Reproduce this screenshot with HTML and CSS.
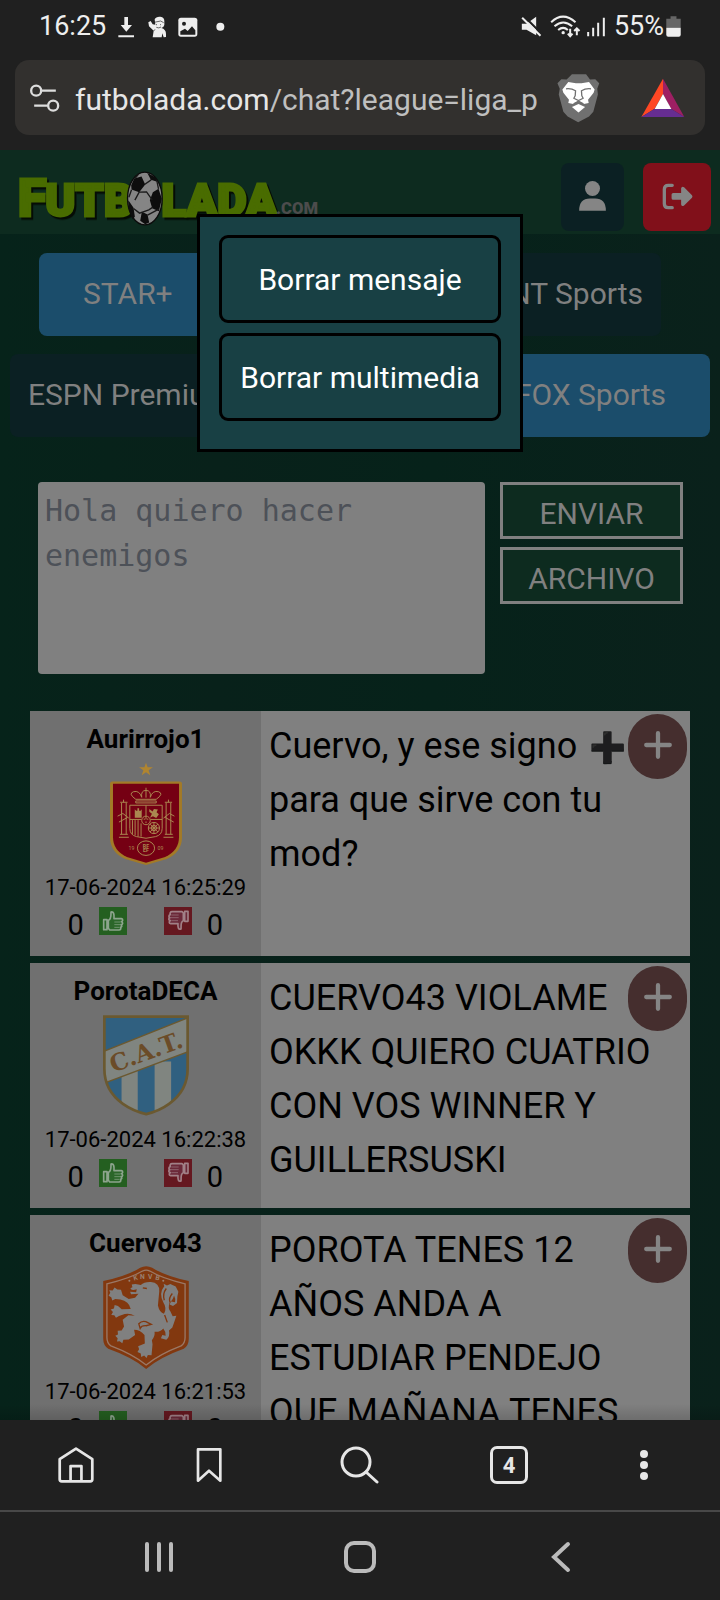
FILE: index.html
```html
<!DOCTYPE html>
<html lang="es">
<head>
<meta charset="utf-8">
<meta name="viewport" content="width=device-width, initial-scale=1">
<title>Futbolada - Chat</title>
<link rel="stylesheet" href="styles.css">
</head>
<body>
<svg class="defs" aria-hidden="true">
  <symbol id="thumb-up" viewBox="0 0 84 84">
    <path d="M14 38h10v30H14zM28 40c9-3 8-15 8-25 8-2 10 6 9 20h22c6 1 5 9 0 9 6 2 5 9-1 9 4 2 3 8-2 8 3 3 1 8-4 8H32l-4-5z" fill="#2b6629" stroke="#8da48d" stroke-width="5" stroke-linejoin="round"/>
    <path d="M46 45h18M46 53h17M46 61h14" stroke="#6f936e" stroke-width="3"/>
  </symbol>
  <symbol id="thumb-down" viewBox="0 0 84 84">
    <path d="M62 13h10v30H62zM58 41c-9 3-6 12-7 25-8 3-10-5-9-16H20c-6-1-5-8-1-9-6-1-6-8-1-9-5-2-4-8 1-9-2-4 0-9 5-9h30l4 4z" fill="#6b2939" stroke="#a18087" stroke-width="5" stroke-linejoin="round"/>
    <path d="M22 24h22M20 32h24M22 41h20" stroke="#8d616b" stroke-width="3"/>
  </symbol>
  <symbol id="plus" viewBox="0 0 28 28">
    <path d="M14 3v22M3 14h22" stroke="currentColor" stroke-width="4" stroke-linecap="round"/>
  </symbol>
</svg>

<div class="status">
  <span class="clock">16:25</span>
  <svg class="st-left" viewBox="350 40 330 75" aria-hidden="true">
    <g fill="#eee">
      <path d="M375 49h11v24h12l-17 20-17-20h11zM357 104h47v6h-47z"/>
      <path d="M466 56q4-9 17-8 13 2 12 15v10q-2 8-9 9 14 4 14 18v9l-7 1-4-12-2 12h-27l3-20-14-13-2-12 7-4 6 10 8 1z"/>
      <rect x="537" y="51" width="57" height="57" rx="8"/>
      <circle cx="663" cy="78" r="12"/>
    </g>
    <path d="M464 65l20-4 9 5M470 72h3M482 72h3M471 80q8 4 14-1M463 91l4-5" fill="none" stroke="#222" stroke-width="2"/>
    <circle cx="554" cy="69" r="6" fill="#202020"/>
    <path d="M543 92l14-8 8 7 13-14 10 12v13h-45z" fill="#202020"/>
  </svg>
  <svg class="st-right" viewBox="480 40 260 75" aria-hidden="true">
    <path d="M485 69h14l29-21v56l-29-17h-14z" fill="#eee"/>
    <path d="M488 43l60 60" stroke="#202020" stroke-width="6"/>
    <path d="M486 51l55 54" stroke="#eee" stroke-width="6"/>
    <g fill="none" stroke="#eee" stroke-width="6">
      <path d="M573 65q35-34 73 0M583 77q26-23 53 0M594 88q15-13 29 0"/>
      <path d="M630 84v22M623 99l7 8 7-8M650 104V84M642 91l8-8 8 8"/>
      <path d="M684 94v13M699 81v26M714 66v41M731 51v56"/>
    </g>
    <circle cx="609" cy="96" r="5" fill="#eee"/>
  </svg>
  <span class="percent">55%</span>
  <svg class="battery" viewBox="0 0 44 64" aria-hidden="true">
    <path d="M13 1h18v7h13v28H0V8h13z" fill="#666"/><path d="M0 36h44v21q0 6-6 6H6q-6 0-6-6z" fill="#eee"/>
  </svg>
</div>

<div class="address">
  <svg class="tune" viewBox="88 245 95 90" fill="none" stroke="#ddd" stroke-width="7" aria-hidden="true">
    <circle cx="109" cy="268" r="15"/><path d="M126 268h42M103 313h41"/><circle cx="160" cy="313" r="15"/>
  </svg>
  <div class="url">futbolada.com<span class="path">/chat?league=liga_p</span></div>
  <svg class="brave" viewBox="590 215 130 152" aria-hidden="true">
    <path d="M635 219h43l12 16 16-1 12 12-6 17 2 17-14 53-13 14-33 18-32-18-13-14-14-53 3-17-7-17 12-12 16 1z" fill="#707070"/>
    <path d="M624 242l23 4h17l23-4 17 23-3 10-17 21 2 10-15 3-16-10-16 10-15-3 2-10-17-21-3-10z" fill="#fff"/>
    <path d="M655 309l20 9-20 17-20-17z" fill="#fff"/>
    <path d="M617 263q16-2 29 6l-1 15-4 8 14 7 14-7-4-8-1-15q13-8 29-6M640 309l15-8 15 8" fill="none" stroke="#707070" stroke-width="4"/>
  </svg>
  <svg class="bat" viewBox="842 232 132 120" aria-hidden="true">
    <path d="M908 234v46l-25 44-40 25z" fill="#ff4724"/><path d="M908 234l64 115-40-25-24-44z" fill="#9e1f63"/><path d="M843 349l40-25h49l40 25z" fill="#662d91"/><path d="M908 280l25 45h-50z" fill="#fff"/>
  </svg>
</div>

<main class="page">
  <header class="top">
    <svg class="logo" viewBox="50 45 910 200" role="img" aria-label="Futbolada.com">
      <g class="logo-type">
        <text x="53" y="214" class="big">F</text><text x="135" y="214">UTB</text><text x="484" y="214">LADA</text>
      </g>
      <text x="828" y="206" class="com">.COM</text>
      <ellipse cx="434" cy="160" rx="52" ry="79" fill="#858585" stroke="#0b0b0b" stroke-width="4"/>
      <g fill="#0d0d0d">
        <path d="M402 100l22-6 11 24-18 23-23-8-1-13zM458 141l17-10 10 30-9 37-20-9-7-24zM385 166l15 22 4 27-7 7q-12-22-13-52zM425 200l17 8 5 24-12 5-15-10zM441 83l27 15 3 12-19-6z"/>
      </g>
      <path d="M417 141l-13 24M417 141l22-1 17 24M433 118l20-14M400 190l18 14 28-10 12-8M475 131l-5-24M404 100l12-14M442 210l34-18M394 134l-8 22" fill="none" stroke="#1a1a1a" stroke-width="4"/>
    </svg>
    <div class="top-actions">
      <button class="icon-btn user" aria-label="Perfil"><svg viewBox="657 107 82 92"><circle cx="698" cy="130" r="23" fill="currentColor"/><path d="M657 198q0-37 33-37h16q33 0 33 37z" fill="currentColor"/></svg></button>
      <button class="icon-btn logout" aria-label="Salir"><svg viewBox="904 112 94 82"><path d="M935 119h-12q-12 0-12 12v44q0 12 12 12h12" fill="none" stroke="currentColor" stroke-width="10" stroke-linecap="round"/><path d="M938 142h24v-14q2-8 9-3l24 24q3 4 0 8l-24 23q-7 5-9-3v-14h-24q-5 0-5-5v-11q0-5 5-5z" fill="currentColor"/></svg></button>
    </div>
  </header>

  <nav class="channels">
    <div class="row row-a"><button class="chan wide on">STAR+</button><button class="chan">TNT Sports</button></div>
    <div class="row row-b"><button class="chan">ESPN Premium</button><button class="chan wide on">FOX Sports</button></div>
  </nav>

  <form class="compose">
    <textarea class="message" aria-label="Mensaje" placeholder="Hola quiero hacer enemigos"></textarea>
    <div class="compose-actions">
      <button type="button" class="send">ENVIAR</button>
      <button type="button" class="send">ARCHIVO</button>
    </div>
  </form>

  <section class="posts">
    <article class="post">
      <div class="author">
        <div class="name">Aurirrojo1</div>
        <svg class="crest" viewBox="265 186 218 312" aria-label="España">
          <path d="M374 188l5 14h16l-13 9 5 15-13-9-13 9 5-15-13-9h16z" fill="#b08530"/>
          <path d="M272 245h204q7 0 7 7v162q0 45-46 66l-63 18-63-18q-46-21-46-66V252q0-7 7-7z" fill="#a37a27"/>
          <path d="M274 252h200v162q0 40-42 60l-58 17-58-17q-42-20-42-60z" fill="#750013"/>
          <g fill="none" stroke="#aa8850" stroke-width="3">
            <path d="M343 299q-24-17-7-23 18-5 25 17-3-21 13-21t13 21q7-22 25-17 17 6-7 23zM374 264v30M343 304h62v6h-62z"/>
            <path d="M325 317h98v70q0 20-20 25l-29 5-29-5q-20-5-20-25zM374 317v43M325 360h35M388 360h35"/>
            <path d="M333 362v42M341 362v46M350 362v50M359 372v40"/>
            <circle cx="374" cy="363" r="13"/><path d="M367 359h4M377 359h4M374 366v5"/>
            <circle cx="398" cy="386" r="17"/><circle cx="398" cy="386" r="8"/><path d="M398 369v34M381 386h34M386 374l24 24M410 374l-24 24"/>
            <path d="M300 310v95M314 310v95M435 310v95M449 310v95M296 308h22M431 308h22M292 414h30M427 414h30M295 405h24M431 405h24M288 350l16-8 18 14M292 368l26-14M427 356l18-14 15 8M432 354l26 14M306 300v8M442 300v8"/>
            <ellipse cx="374" cy="447" rx="26" ry="22"/>
          </g>
          <path d="M340 355v-26l4 5h4v-8h5v8h5l3-5v26zM384 328l10 8 4-8 12 2-4 8 7 6-8 12-10-6-9 5 6-12-8-6z" fill="#aa8850"/>
          <g fill="#aa8850" font-family="Roboto" font-size="16" font-weight="700" text-anchor="middle"><text x="374" y="445">RF</text><text x="374" y="460">EF</text><text x="330" y="453" font-weight="400">19</text><text x="418" y="453" font-weight="400">09</text></g>
        </svg>
        <time class="date">17-06-2024 16:25:29</time>
        <div class="votes"><span>0</span><button class="vote up" aria-label="Me gusta"><svg><use href="#thumb-up"/></svg></button><button class="vote down" aria-label="No me gusta"><svg><use href="#thumb-down"/></svg></button><span>0</span></div>
      </div>
      <p class="text">Cuervo, y ese signo <span class="emoji">➕</span> para que sirve con tu mod?</p>
      <button class="more" aria-label="Más opciones"><svg><use href="#plus"/></svg></button>
    </article>

    <article class="post">
      <div class="author">
        <div class="name">PorotaDECA</div>
        <svg class="crest" viewBox="249 183 255 298" aria-label="Atlético Tucumán">
          <clipPath id="cat"><path d="M253 187h247v155q0 65-55 104-30 22-68 30-38-8-69-30-55-39-55-104z"/></clipPath>
          <g clip-path="url(#cat)">
            <path d="M249 183h255v300H249z" fill="#306080"/>
            <path d="M304 340h48v140h-48zM402 320h49v160h-49z" fill="#808580"/>
            <path d="M249 291l255-102v101L249 386z" fill="#808580" stroke="#6b5930" stroke-width="4"/>
          </g>
          <path d="M253 187h247v155q0 65-55 104-30 22-68 30-38-8-69-30-55-39-55-104z" fill="none" stroke="#6b5930" stroke-width="8"/>
          <text x="378" y="316" text-anchor="middle" transform="rotate(-20 378 295)" font-family="DejaVu Serif" font-weight="700" font-size="70" fill="#6b4c28">C.A.T.</text>
        </svg>
        <time class="date">17-06-2024 16:22:38</time>
        <div class="votes"><span>0</span><button class="vote up" aria-label="Me gusta"><svg><use href="#thumb-up"/></svg></button><button class="vote down" aria-label="No me gusta"><svg><use href="#thumb-down"/></svg></button><span>0</span></div>
      </div>
      <p class="text">CUERVO43 VIOLAME OKKK QUIERO CUATRIO CON VOS WINNER Y GUILLERSUSKI</p>
      <button class="more" aria-label="Más opciones"><svg><use href="#plus"/></svg></button>
    </article>

    <article class="post">
      <div class="author">
        <div class="name">Cuervo43</div>
        <svg class="crest" viewBox="249 183 255 307" aria-label="Países Bajos">
          <path d="M249 228q74-16 110-40 18-9 36 0 36 24 109 40v172q0 20-15 30-70 25-112 60-42-35-113-60-15-10-15-30z" fill="#82380f"/>
          <path d="M260 236q70-16 106-38 11-5 22 0 36 22 105 38v160q0 17-12 25-65 25-104 57-39-32-105-57-12-8-12-25z" fill="none" stroke="#9a7866" stroke-width="4"/>
          <path d="M361 240q10-10 30-9 26 2 25 28l-4 42q5 22 18 24 10-15-2-34-14-28 3-48l-2-7 10 5 10-4 16 7 8 16-3 14-1 19-12 9-10-4 4-9 12 2q2-12-3-20-4 16-13 20-6 18 2 27l7 15 11-2-6 18-6 17-10 9q4 18-8 28l-16-5 4-9 10 2q1-13-7-22-10 12-26 10 2 13-8 25l2 12-3 33-11-1-4 9-7-7-9 4-1-10-10-5 5-8-3-9 20-8-1-25q-13-16-31-16l3 16-19 13-16 1-3 10-8-6-8 1 2-10-7-7 8-4-1-11 12-1 7-12-4-20 17-13 19 1q-14-8-30-5l-17 6-9 5-5-7-9-1 5-9-7-7 10-3 2-11 10 3 11 10 27-1q-5-23-31-28l-15-2-9 5-3-10-8-4 5-9-3-8 10 1 6-9 8 6 11 1 5 16 18 11 19-3 10-12-22 1-3-7 18 1 2-9q-17 6-19-3l6-3-2-8 11-1z" fill="#808080"/>
          <path d="M355 355q9-10 21-6l16 8-15 4q-14-1-18 8zM437 250q-12 16-6 35M455 265q-12 14-7 26M432 329l8 22M367 248l12 2" fill="none" stroke="#82380f" stroke-width="4"/>
          <g fill="#9a8070" font-family="Roboto" font-weight="700" font-size="20" text-anchor="middle"><text x="345" y="225" transform="rotate(-14 345 218)">K</text><text x="366" y="221">N</text><text x="389" y="221">V</text><text x="411" y="225" transform="rotate(14 411 218)">B</text><circle cx="327" cy="227" r="3"/><circle cx="428" cy="227" r="3"/></g>
        </svg>
        <time class="date">17-06-2024 16:21:53</time>
        <div class="votes"><span>0</span><button class="vote up" aria-label="Me gusta"><svg><use href="#thumb-up"/></svg></button><button class="vote down" aria-label="No me gusta"><svg><use href="#thumb-down"/></svg></button><span>0</span></div>
      </div>
      <p class="text">POROTA TENES 12 AÑOS ANDA A ESTUDIAR PENDEJO QUE MAÑANA TENES</p>
      <button class="more" aria-label="Más opciones"><svg><use href="#plus"/></svg></button>
    </article>
  </section>

  <div class="dialog" role="dialog" aria-label="Opciones del mensaje">
    <button class="option">Borrar mensaje</button>
    <button class="option">Borrar multimedia</button>
  </div>
</main>

<nav class="toolbar">
  <button aria-label="Inicio"><svg width="36" height="36" viewBox="174 113 106 106" fill="none" stroke="#e6e6e6" stroke-width="8" stroke-linejoin="round"><path d="M227 118l48 31v59q0 6-6 6h-84q-6 0-6-6v-59zM211 213v-44h32v44"/></svg></button>
  <button aria-label="Marcadores"><svg width="26" height="34" viewBox="590 116 76 102" fill="none" stroke="#e6e6e6" stroke-width="8" stroke-linejoin="round"><path d="M595 120h67v94l-34-30-33 30z"/></svg></button>
  <button aria-label="Buscar"><svg width="40" height="40" viewBox="0 0 40 40" fill="none" stroke="#e6e6e6" stroke-width="3" stroke-linecap="round"><circle cx="17" cy="17" r="14"/><path d="M27 27l11 10"/></svg></button>
  <button aria-label="Pestañas"><span class="tabs">4</span></button>
  <button aria-label="Menú"><svg width="8" height="32" viewBox="0 0 8 32" fill="#e6e6e6"><circle cx="4" cy="5" r="4"/><circle cx="4" cy="16" r="4"/><circle cx="4" cy="27" r="4"/></svg></button>
</nav>
<nav class="system">
  <button aria-label="Recientes"><svg width="30" height="32" viewBox="0 0 30 32" stroke="#bbb" stroke-width="4" stroke-linecap="round"><path d="M3 3v26M15 3v26M27 3v26"/></svg></button>
  <button aria-label="Inicio del sistema"><svg width="34" height="34" viewBox="0 0 34 34" fill="none" stroke="#bbb" stroke-width="4"><rect x="3" y="3" width="28" height="28" rx="8"/></svg></button>
  <button aria-label="Atrás"><svg width="20" height="32" viewBox="0 0 20 32" fill="none" stroke="#bbb" stroke-width="4" stroke-linecap="round"><path d="M17 3L3 16l14 13"/></svg></button>
</nav>
</body>
</html>
```

FILE: styles.css
```css
* { box-sizing: border-box; }
body {
  margin: 0;
  height: 100vh;
  display: flex;
  flex-direction: column;
  overflow: hidden;
  background: #202020;
  font-family: Roboto, "Liberation Sans", sans-serif;
}
button { margin: 0; padding: 0; border: 0; background: none; font: inherit; color: inherit; }
svg { display: block; flex: none; }
.defs { position: absolute; width: 0; height: 0; }

/* phone status bar */
.status { display: flex; align-items: center; flex: none; height: 52px; margin-bottom: 8px; padding: 0 39px; color: #eee; font-size: 27px; }
.clock { margin-right: 10px; }
.st-left { width: 110px; height: 25px; }
.st-right { width: 87px; height: 25px; margin: 0 7px 0 auto; }
.battery { width: 15px; height: 21px; margin-left: 2px; }

/* address bar */
.address { display: flex; align-items: center; flex: none; height: 75px; margin: 0 15px 15px; padding: 0 20px 0 14px; border-radius: 14px; background: #32302e; }
.tune { width: 32px; height: 30px; }
.url { flex: 1; min-width: 0; margin-left: 14px; padding-top: 3px; overflow: hidden; white-space: nowrap; font-size: 30px; color: #e6e6e6; }
.path { color: #bfbfbf; }
.brave { width: 43px; height: 50px; }
.bat { width: 44px; height: 40px; margin-left: 41px; }

/* web page */
.page {
  position: relative;
  flex: 1;
  min-height: 0;
  overflow: hidden;
  background: linear-gradient(90deg, #06231a, #08211a 30%, #06221a 60%, #0a211b);
}
.page::after { content: ""; position: absolute; left: 0; right: 0; bottom: 0; height: 16px; background: linear-gradient(transparent, rgba(0, 0, 0, .15)); }
.top { display: flex; justify-content: space-between; align-items: flex-start; height: 84px; padding: 10px 9px 0 17px; background: #0d2b1f; }
.logo { width: 303px; height: 67px; overflow: visible; }
.logo-type { font-weight: 900; font-size: 136px; fill: #496c00; stroke: #496c00; stroke-width: 9px; filter: drop-shadow(6px 7px 0 #050c05); }
.big { font-size: 156px; }
.com { font-size: 50px; font-weight: 900; fill: #4c4c4c; }
.top-actions { display: flex; gap: 19px; margin-top: 3px; }
.icon-btn { display: flex; justify-content: center; height: 68px; border-radius: 8px; color: #858585; }
.user { width: 63px; padding-top: 18px; background: #0b2023; }
.user svg { width: 27px; height: 30px; }
.logout { width: 68px; padding-top: 20px; background: #81101a; }
.logout svg { width: 31px; height: 27px; }

.channels { display: grid; gap: 18px; padding-top: 19px; font-size: 30px; }
.row { display: flex; justify-content: space-between; }
.row-a { padding: 0 59px 0 39px; }
.row-b { padding: 0 10px 0 10px; }
.chan { height: 83px; padding: 0 18px 2px; border-radius: 8px; background: #0b2023; color: #808080; }
.wide { padding: 0 44px 2px; }
.on { background: #1b4d6b; }

.compose { display: flex; gap: 15px; padding: 45px 37px 0 38px; }
.message { flex: 1; min-width: 0; height: 192px; padding: 6px 7px; border: 0; border-radius: 4px; resize: none; background: #808080; font: 30px/45px "DejaVu Sans Mono", monospace; }
.message::placeholder { color: #4d5158; opacity: 1; }
.compose-actions { display: grid; align-content: start; gap: 8px; width: 183px; }
.send { height: 57px; padding-top: 5px; border: 3px solid #808080; background: #0d2b1f; color: #808080; font-size: 30px; }

.posts { display: grid; gap: 7px; padding: 37px 30px 0; }
.post { position: relative; display: flex; min-height: 245px; background: #808080; color: #000; }
.author { display: flex; flex-direction: column; align-items: center; flex: none; width: 231px; padding-top: 7px; background: #707070; }
.name { height: 44px; line-height: 42px; font-size: 26px; font-weight: 700; }
.crest { width: 86px; height: 103px; }
.date { margin-top: 8px; line-height: 30px; font-size: 22px; }
.votes { display: flex; align-items: center; width: 156px; margin-top: 4px; line-height: 36px; font-size: 29px; }
.vote { width: 28px; height: 28px; margin-bottom: 8px; }
.vote svg { width: 28px; height: 28px; }
.up { margin-left: 15px; background: #245f20; }
.down { margin: 0 15px 8px 37px; background: #651820; }
.text { margin: 0; padding: 8px 20px 0 8px; font-size: 36px; line-height: 54px; }
.emoji { display: inline-block; margin-left: 3px; font-size: 30px; line-height: 1; color: #202020; filter: brightness(.3); }
.more { position: absolute; top: 3px; right: 3px; display: grid; justify-items: center; align-content: start; width: 59px; height: 65px; padding-top: 16px; border-radius: 30px; background: #452e2e; color: #858585; }
.more svg { width: 30px; height: 30px; }

.dialog { position: absolute; top: 64px; left: 50%; display: grid; gap: 10px; width: 326px; margin-left: -163px; padding: 18px 19px 28px; border: 3px solid #000; background: #184044; }
.option { height: 88px; border: 3px solid #000; border-radius: 9px; color: #fff; font-size: 30px; }

/* browser and system bars */
.toolbar { display: grid; grid-template-columns: 132fr 134fr 166fr 134fr 136fr; flex: none; height: 92px; padding: 0 8px 0 10px; border-bottom: 2px solid #484848; }
.toolbar button, .system button { display: grid; place-items: center; }
.tabs { display: grid; place-items: center; width: 38px; height: 38px; border: 3px solid #e6e6e6; border-radius: 7px; color: #e6e6e6; font-size: 22px; font-weight: 700; }
.system { display: grid; grid-template-columns: repeat(3, 1fr); flex: none; height: 88px; padding: 2px 58px 0; }
```
